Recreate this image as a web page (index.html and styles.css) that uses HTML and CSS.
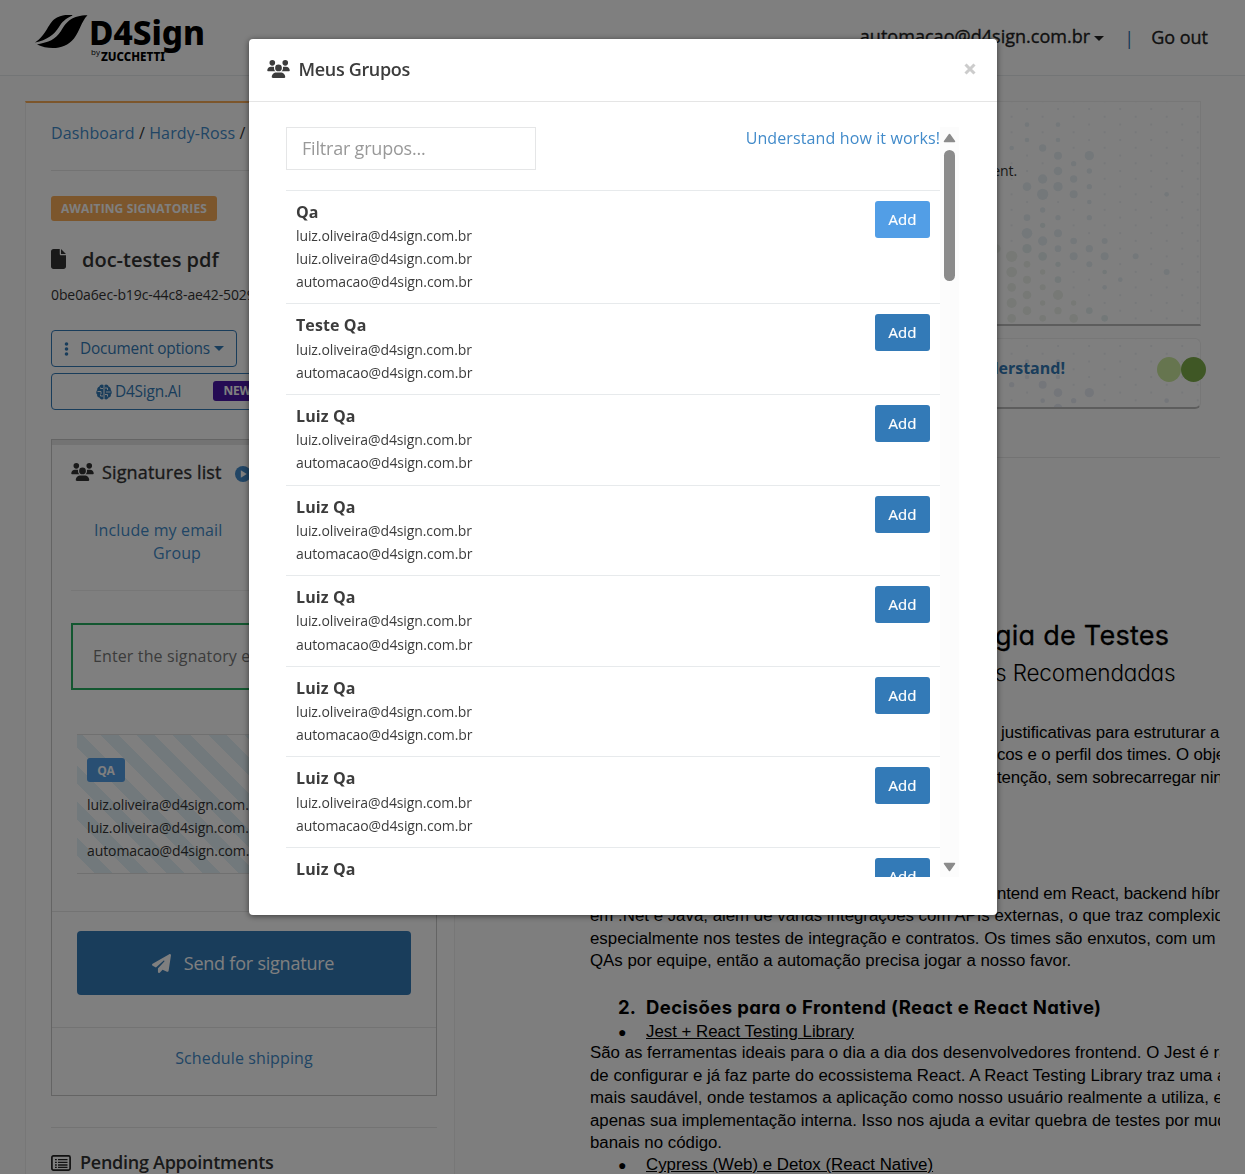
FILE: index.html
```html
<!DOCTYPE html>
<html lang="en">
<head>
<meta charset="utf-8">
<title>D4Sign</title>
<link rel="stylesheet" href="styles.css">
</head>
<body>
<svg class="defs" width="0" height="0" aria-hidden="true">
  <defs>
    <symbol id="users" viewBox="0 0 640 512"><path d="M144 0a80 80 0 1 1 0 160A80 80 0 1 1 144 0zM512 0a80 80 0 1 1 0 160A80 80 0 1 1 512 0zM0 298.7C0 239.8 47.8 192 106.7 192l42.7 0c15.9 0 31 3.5 44.6 9.7c-1.3 7.2-1.9 14.7-1.9 22.3c0 38.2 16.8 72.5 43.3 96c-.2 0-.4 0-.7 0L21.3 320C9.6 320 0 310.4 0 298.7zM405.3 320c-.2 0-.4 0-.7 0c26.6-23.5 43.3-57.8 43.3-96c0-7.6-.7-15-1.9-22.3c13.6-6.3 28.7-9.7 44.6-9.7l42.7 0C592.2 192 640 239.8 640 298.7c0 11.8-9.6 21.3-21.3 21.3l-213.3 0zM224 224a96 96 0 1 1 192 0 96 96 0 1 1 -192 0zM128 485.3C128 411.7 187.7 352 261.3 352l117.3 0C452.3 352 512 411.7 512 485.3c0 14.7-11.9 26.7-26.7 26.7l-330.7 0c-14.7 0-26.7-11.9-26.7-26.7z"/></symbol>
    <pattern id="grid" width="93.1" height="46.55" patternUnits="userSpaceOnUse" x="88" y="9.7">
      <circle cx="23.300" cy="23.300" r="3.500" fill="#eef1f4"/><circle cx="69.800" cy="0" r="3.500" fill="#eef1f4"/><circle cx="69.800" cy="46.550" r="3.500" fill="#eef1f4"/>
    </pattern>
  </defs>
</svg>

<div class="page">
  <header class="topbar">
    <svg class="logo" width="172" height="50" viewBox="0 0 172 50">
      <path d="M0 28.500 C12 21 13 8 22 3.500 C28 .5 31 1 37 1 L37.500 1.500 C30 5 27 8 24 13 C19 21 12 26 0 28.500Z"/>
      <path d="M2 30.500 C14 28 20 26 26 17 C32 7 37 1.500 52.500 1.300 C46 8 45 17 39 24.500 C30 36 14 36 2 30.500Z"/>
      <text class="logo-name" x="54" y="31" textLength="116" lengthAdjust="spacingAndGlyphs">D4Sign</text>
      <text class="logo-by" x="56" y="41">by</text>
      <text class="logo-sub" x="66" y="46.500" textLength="64" lengthAdjust="spacingAndGlyphs">ZUCCHETTI</text>
    </svg>
    <nav class="account">
      <span class="mail">automacao@d4sign.com.br</span><i class="caret"></i>
      <span class="bar">|</span>
      <span class="out">Go out</span>
    </nav>
  </header>

  <div class="columns">
    <section class="doc-card">
      <div class="crumbs"><a>Dashboard</a> / <a>Hardy-Ross</a> /</div>
      <div class="status">AWAITING SIGNATORIES</div>
      <h2 class="doc-title"><svg width="15" height="20" viewBox="0 0 384 512"><path d="M0 64C0 28.7 28.7 0 64 0L224 0l0 128c0 17.7 14.3 32 32 32l128 0 0 288c0 35.3-28.7 64-64 64L64 512c-35.3 0-64-28.7-64-64L0 64zm384 64l-128 0L256 0 384 128z"/></svg><span>doc-testes pdf</span></h2>
      <div class="uuid">0be0a6ec-b19c-44c8-ae42-5029</div>
      <button class="outline options"><svg width="5" height="14" viewBox="0 0 5 14"><circle cx="2.5" cy="2" r="1.8"/><circle cx="2.5" cy="7" r="1.8"/><circle cx="2.5" cy="12" r="1.8"/></svg><span>Document options</span><i class="caret"></i></button>
      <button class="outline ai"><svg width="16" height="16" viewBox="0 0 16 16"><path d="M7.5 1v14C5.5 16 4 15 3.4 13.6 1.6 13.6.8 12 1.2 10.6-.2 9.4.1 7 1.2 6 .9 4.300 2 3 3.200 2.700 4 .5 6 0 7.500 1zM8.500 1v14c2 1 3.500 0 4.100-1.400 1.800 0 2.600-1.600 2.200-3 1.400-1.200 1.100-3.600 0-4.600.3-1.700-.8-3-2-3.300C12 .5 10 0 8.500 1z"/><path class="folds" d="M7 4.500H4.500v-1M1.500 7.500H5v2.500M7 12H4.500v-1.500M9 4h2.500v2M14.500 8H10M9 10.500h2.500v2"/></svg><span>D4Sign.AI</span><b class="new">NEW</b></button>

      <div class="panel">
        <h3 class="panel-title"><svg width="23" height="18"><use href="#users"/></svg><span>Signatures list</span><svg class="play" width="16" height="16" viewBox="0 0 16 16"><circle cx="8" cy="8" r="8"/><path d="M5.800 4.200v7.600l6-3.800z"/></svg></h3>
        <div class="actions"><a>Include my email</a><a>Group</a></div>
        <div class="email-input">Enter the signatory email</div>
        <div class="group">
          <b class="tag">QA</b>
          <div>luiz.oliveira@d4sign.com.br</div>
          <div>luiz.oliveira@d4sign.com.br</div>
          <div>automacao@d4sign.com.br</div>
        </div>
        <div class="send-wrap"><button class="send"><svg width="19" height="19" viewBox="0 0 512 512"><path d="M498.100 5.600c10.100 7 15.400 19.100 13.500 31.200l-64 416c-1.500 9.700-7.400 18.200-16 23s-18.900 5.400-28 1.600L284 427.700l-68.500 74.100c-8.900 9.700-22.900 12.900-35.200 8.100S160 493.200 160 480l0-83.600c0-4 1.500-7.800 4.200-10.800L331.800 202.800c5.800-6.300 5.600-16-.4-22s-15.700-6.400-22-.7L106 360.800 17.700 316.600C7.100 311.300 .3 300.700 0 288.900s5.900-22.800 16.100-28.700l448-256c10.700-6.100 23.900-5.500 34 1.400z"/></svg><span>Send for signature</span></button></div>
        <div class="schedule"><a>Schedule shipping</a></div>
      </div>
      <h3 class="pending"><svg width="20" height="16" viewBox="0 0 20 16"><rect x=".9" y=".9" width="18.200" height="14.200" rx="1.500"/><path d="M4 4.600h1.800M4 7.300h1.800M4 10h1.800M4 12.400h1.800M7 4.600h9.500M7 7.300h9.500M7 10h9.500M7 12.400h9.500"/></svg><span>Pending Appointments</span></h3>
    </section>

    <section class="right">
      <div class="info-card">
        <svg class="dots" width="261" height="222" viewBox="0 0 261 222">
          <g transform="translate(51 -4) scale(.3333)">
            <rect x="-10" width="640" height="680" fill="url(#grid)"/>
            <g fill="#e9f0f5">
              <circle cx="158" cy="150" r="11"/><circle cx="204" cy="173" r="12"/><circle cx="298" cy="173" r="14"/><circle cx="204" cy="219" r="13"/><circle cx="298" cy="219" r="8"/><circle cx="158" cy="243" r="14"/><circle cx="251" cy="243" r="11"/><circle cx="111" cy="266" r="13"/><circle cx="204" cy="266" r="14"/><circle cx="298" cy="266" r="8"/><circle cx="158" cy="289" r="17"/><circle cx="251" cy="289" r="12"/><circle cx="111" cy="359" r="10"/><circle cx="158" cy="336" r="8"/><circle cx="204" cy="359" r="8"/><circle cx="298" cy="359" r="8"/><circle cx="111" cy="406" r="16"/><circle cx="204" cy="406" r="12"/><circle cx="158" cy="429" r="14"/><circle cx="251" cy="429" r="10"/><circle cx="344" cy="429" r="9"/><circle cx="204" cy="452" r="10"/><circle cx="298" cy="452" r="11"/><circle cx="251" cy="475" r="12"/><circle cx="344" cy="475" r="12"/><circle cx="437" cy="475" r="9"/><circle cx="298" cy="499" r="9"/><circle cx="530" cy="522" r="9"/><circle cx="111" cy="80" r="7"/><circle cx="204" cy="80" r="7"/><circle cx="111" cy="126" r="7"/><circle cx="204" cy="126" r="7"/><circle cx="65" cy="150" r="7"/><circle cx="251" cy="197" r="8"/><circle cx="530" cy="289" r="7"/><circle cx="298" cy="312" r="7"/><circle cx="391" cy="545" r="7"/><circle cx="344" cy="568" r="7"/>
            </g>
            <g fill="#e7f0f1"><circle cx="111" cy="452" r="14"/><circle cx="158" cy="475" r="13"/><circle cx="204" cy="499" r="8"/><circle cx="204" cy="545" r="10"/><circle cx="298" cy="638" r="10"/><circle cx="344" cy="661" r="10"/><circle cx="158" cy="382" r="8"/><circle cx="344" cy="522" r="7"/></g>
            <g fill="#eef2ec">
              <circle cx="65" cy="475" r="17"/><circle cx="65" cy="522" r="16"/><circle cx="65" cy="568" r="13"/><circle cx="65" cy="615" r="15"/><circle cx="65" cy="661" r="13"/><circle cx="19" cy="452" r="13"/><circle cx="111" cy="499" r="10"/><circle cx="111" cy="545" r="12"/><circle cx="111" cy="591" r="13"/><circle cx="111" cy="638" r="13"/><circle cx="158" cy="522" r="8"/><circle cx="158" cy="568" r="9"/><circle cx="158" cy="615" r="8"/><circle cx="158" cy="661" r="10"/><circle cx="204" cy="591" r="15"/><circle cx="204" cy="638" r="11"/><circle cx="251" cy="615" r="8"/><circle cx="251" cy="661" r="13"/>
            </g>
          </g>
        </svg>
        <span class="info-text">sign the document.</span>
      </div>
      <div class="help-card">
        <svg class="dots" width="261" height="68" viewBox="0 0 261 68">
          <g transform="translate(51 -4) scale(.3333)">
            <rect x="-10" width="640" height="230" fill="url(#grid)"/>
            <g fill="#e9edf4"><circle cx="158" cy="149" r="12"/><circle cx="204" cy="173" r="13"/><circle cx="298" cy="173" r="14"/><circle cx="251" cy="197" r="8"/><circle cx="204" cy="219" r="13"/><circle cx="65" cy="149" r="8"/><circle cx="111" cy="80" r="7"/><circle cx="204" cy="80" r="7"/><circle cx="111" cy="126" r="7"/><circle cx="204" cy="126" r="7"/><circle cx="530" cy="197" r="7"/><circle cx="158" cy="197" r="7"/></g>
          </g>
        </svg>
        <b class="help-text">Understand!</b>
        <span class="lights"><i></i><i></i></span>
      </div>
      <div class="viewer">
        <div class="pdf-h1">gia de Testes</div>
        <div class="pdf-h2">s Recomendadas</div>
        <div class="pdf-intro">
          <p class="inset">justificativas para estruturar a</p>
          <p class="frag">cos e o perfil dos times. O obje</p>
          <p class="frag">tenção, sem sobrecarregar nin</p>
        </div>
        <div class="pdf-body">
          <p class="frag">ntend em React, backend híbri</p>
          <p>em .Net e Java, além de várias integrações com APIs externas, o que traz complexid</p>
          <p>especialmente nos testes de integração e contratos. Os times são enxutos, com um</p>
          <p>QAs por equipe, então a automação precisa jogar a nosso favor.</p>
        </div>
        <div class="pdf-h3"><span>2.</span>Decisões para o Frontend (React e React Native)</div>
        <div class="bullet"><span>●</span><u>Jest + React Testing Library</u></div>
        <div class="pdf-body tight">
          <p>São as ferramentas ideais para o dia a dia dos desenvolvedores frontend. O Jest é rá</p>
          <p>de configurar e já faz parte do ecossistema React. A React Testing Library traz uma a</p>
          <p>mais saudável, onde testamos a aplicação como nosso usuário realmente a utiliza, e</p>
          <p>apenas sua implementação interna. Isso nos ajuda a evitar quebra de testes por mud</p>
          <p>banais no código.</p>
        </div>
        <div class="bullet"><span>●</span><u>Cypress (Web) e Detox (React Native)</u></div>
      </div>
    </section>
  </div>
</div>

<div class="backdrop"></div>
<div class="modal">
  <div class="modal-head"><svg width="23" height="18"><use href="#users"/></svg><span>Meus Grupos</span><svg class="close" width="12" height="12" viewBox="0 0 12 12"><path d="M1.500 1.500l9 9M10.500 1.500l-9 9"/></svg></div>
  <div class="modal-body">
    <div class="list">
      <div class="tools"><div class="filter">Filtrar grupos...</div><a>Understand how it works!</a></div>
      <div class="row first"><div><b>Qa</b><p>luiz.oliveira@d4sign.com.br</p><p>luiz.oliveira@d4sign.com.br</p><p>automacao@d4sign.com.br</p></div><button class="hover">Add</button></div>
      <div class="row"><div><b>Teste Qa</b><p>luiz.oliveira@d4sign.com.br</p><p>automacao@d4sign.com.br</p></div><button>Add</button></div>
      <div class="row"><div><b>Luiz Qa</b><p>luiz.oliveira@d4sign.com.br</p><p>automacao@d4sign.com.br</p></div><button>Add</button></div>
      <div class="row"><div><b>Luiz Qa</b><p>luiz.oliveira@d4sign.com.br</p><p>automacao@d4sign.com.br</p></div><button>Add</button></div>
      <div class="row"><div><b>Luiz Qa</b><p>luiz.oliveira@d4sign.com.br</p><p>automacao@d4sign.com.br</p></div><button>Add</button></div>
      <div class="row"><div><b>Luiz Qa</b><p>luiz.oliveira@d4sign.com.br</p><p>automacao@d4sign.com.br</p></div><button>Add</button></div>
      <div class="row"><div><b>Luiz Qa</b><p>luiz.oliveira@d4sign.com.br</p><p>automacao@d4sign.com.br</p></div><button>Add</button></div>
      <div class="row"><div><b>Luiz Qa</b></div><button>Add</button></div>
    </div>
    <div class="scrollbar">
      <svg width="13" height="10" viewBox="0 0 13 10"><path d="M6.500 1.500L11.500 8.500H1.500z"/></svg>
      <i></i>
      <svg class="down" width="13" height="10" viewBox="0 0 13 10"><path d="M6.500 8.500L11.500 1.500H1.500z"/></svg>
    </div>
  </div>
</div>
</body>
</html>
```
FILE: styles.css
```css
* { box-sizing: border-box; }
html, body { margin: 0; height: 1174px; overflow: hidden; }
body { background: #fdfdfd; color: #333; font-family: "Open Sans", "Noto Sans", sans-serif; font-size: 16px; line-height: 23px; }
a { color: #428bca; letter-spacing: .12px; }
h2, h3, p { margin: 0; }
button { font-family: inherit; }
svg { flex: none; }
.defs { position: absolute; }
.page { height: 1174px; overflow: hidden; }

.topbar { height: 76px; border-bottom: 1px solid #e7eaec; display: flex; justify-content: space-between; padding: 14px 37px 0 35px; background: #fff; }
.logo { overflow: visible; }
.logo-name { font: 800 34px "Noto Sans", sans-serif; }
.logo-by { font: 8px "Open Sans", sans-serif; }
.logo-sub { font: 800 12px "Noto Sans", sans-serif; }
.account { display: flex; height: 46px; align-items: center; font-size: 18px; color: #222; white-space: nowrap; -webkit-text-stroke: .35px #222; }
.caret { display: inline-block; border: 5px solid transparent; border-top-color: currentColor; border-bottom: 0; margin-left: 4px; }
.bar { color: #2a6fae; margin: 2px 17px 0 20px; -webkit-text-stroke: 0; }
.mail { margin-top: -2px; letter-spacing: .03px; }
.account .caret { margin-top: 2px; }

.columns { display: flex; padding: 25px 0 0 25px; }
.doc-card { width: 430px; height: 1100px; background: #fff; border: 1px solid #eee; border-top: 2px solid #f8ac59; padding: 19px 17px 0 25px; }
.crumbs { height: 49px; border-bottom: 1px solid #e7e7e7; letter-spacing: .12px; }
.status { width: 166px; height: 25px; margin-top: 25px; border-radius: 3px; background: #f8ac59; color: #fff; font-size: 12px; font-weight: 700; line-height: 25px; text-align: center; white-space: nowrap; letter-spacing: .12px; }
.doc-title { display: flex; align-items: center; height: 28px; margin-top: 24px; font-size: 20px; font-weight: 600; }
.doc-title span { margin-left: 16px; }
.doc-title svg, .panel-title svg { fill: #333; }
.uuid { height: 23px; margin-top: 10px; font-size: 14px; white-space: nowrap; letter-spacing: -.1px; }
.outline { display: flex; align-items: center; height: 37px; background: #fff; border: 1px solid #337ab7; border-radius: 4px; color: #337ab7; font-size: 15.4px; letter-spacing: -.2px; padding: 0 12px; }
.outline svg, .send svg { fill: currentColor; }
.options { width: 186px; margin-top: 24px; }
.options span { margin-left: 11px; white-space: nowrap; }
.ai { width: 250px; margin-top: 6px; padding-left: 44px; }
.ai span { margin-left: 3px; }
.ai .folds { fill: none; stroke: #fff; stroke-width: .9; }
.new { background: #4b17a8; color: #fff; font-size: 12px; height: 20px; line-height: 20px; padding: 0 10px; border-radius: 3px; margin-left: 32px; margin-top: -1px; }

.panel { height: 657px; margin-top: 29px; border: 1px solid #c8c8c8; box-shadow: inset 0 5px #e7e7e7; }
.panel-title { display: flex; align-items: center; height: 24px; margin: 20px 0 0 19px; font-size: 18px; font-weight: 400; -webkit-text-stroke: .35px #333; letter-spacing: .14px; }
.panel-title span { margin: 0 13px 0 8px; }
.panel-title .play { fill: #428bca; margin-top: 3px; -webkit-text-stroke: 0; }
.play path { fill: #fff; }
.actions { display: flex; flex-direction: column; margin-left: 19px; height: 107px; padding-top: 35px; border-bottom: 1px solid #eee; }
.actions a { margin-left: 23px; line-height: 23px; }
.actions a + a { margin-left: 82px; }
.email-input { margin: 32px 19px 0; height: 67px; line-height: 63px; padding-left: 20px; border: 2px solid #27ae60; color: #777; white-space: nowrap; letter-spacing: .12px; }
.group { margin: 44px 25px 0; height: 140px; padding: 23px 10px 0; border-top: 1px solid #e1e1e1; border-bottom: 1px solid #e1e1e1; font-size: 14px; letter-spacing: -.1px; background: repeating-linear-gradient(45deg, #fff 0 12.7px, #e5f3f8 12.7px 25.4px); }
.tag { display: block; width: 38px; height: 24px; margin-bottom: 11px; background: #529ee6; border-radius: 3px; color: #fff; font-size: 12px; line-height: 25px; text-align: center; }
.send-wrap { margin-top: 37px; padding: 19px 25px 0; height: 116px; border-top: 1px solid #e7e7e7; }
.send { width: 334px; height: 64px; border: 0; border-radius: 4px; background: #337ab7; color: #fff; font-size: 18px; letter-spacing: -.22px; display: flex; align-items: center; justify-content: center; gap: 13px; padding-right: 8px; }
.schedule { border-top: 1px solid #e7e7e7; text-align: center; padding-top: 19px; }
.pending { margin-top: 31px; border-top: 1px solid #e7e7e7; display: flex; align-items: center; gap: 9px; padding-top: 23px; font-size: 18px; font-weight: 600; letter-spacing: -.27px; }
.pending svg { fill: none; stroke: #222; stroke-width: 1.7; }
.pending path { stroke-width: 1.3; }

.right { width: 749px; margin-left: 16px; }
.info-card, .help-card { position: relative; width: 730px; background: #fff; border: 1px solid #eee; border-bottom: 2px solid #bbb; }
.info-card { height: 225px; }
.help-card { height: 71px; margin-top: 12px; border-radius: 6px; }
.dots { position: absolute; right: 0; top: 0; }
.info-text, .help-text { position: absolute; white-space: nowrap; }
.info-text { right: 183px; top: 57px; font-size: 14px; letter-spacing: -.1px; }
.help-text { right: 135px; top: 18px; color: #337ab7; }
.lights { position: absolute; right: -6px; top: 18px; display: flex; }
.lights i { width: 24px; height: 25px; border-radius: 50%; background: #cdea9f; }
.lights i + i { width: 25px; background: #7eae4b; }
.viewer { margin-top: 48px; height: 760px; border-top: 1px solid #e7e7e7; overflow: hidden; padding: 161px 0 0 119px; color: #000; font-family: "Liberation Sans", Arial, sans-serif; font-size: 16.85px; white-space: nowrap; }
.viewer p { line-height: 22.4px; }
.viewer .frag { padding-left: 407px; letter-spacing: -.1px; }
.viewer .inset { padding-left: 411px; letter-spacing: -.05px; }
.pdf-h1, .pdf-h2, .pdf-h3 { font-family: Inter, sans-serif; font-feature-settings: "cv11"; }
.pdf-h1 { padding-left: 405px; font-size: 27px; line-height: 34px; height: 36px; letter-spacing: .25px; -webkit-text-stroke: .3px #000; }
.pdf-h2 { padding-left: 405px; font-size: 22.5px; line-height: 36px; font-weight: 300; letter-spacing: -.15px; }
.pdf-intro { margin-top: 31px; }
.pdf-body { margin-top: 93.500px; }
.pdf-h3 { margin-top: 21.500px; padding-left: 28px; font-size: 18.5px; font-weight: 700; line-height: 26px; height: 26px; letter-spacing: .38px; }
.pdf-h3 span { display: inline-block; width: 28px; letter-spacing: 0; }
.bullet { padding-left: 28px; line-height: 23px; height: 22.5px; }
.bullet span { display: inline-block; width: 28px; font-size: 14px; }
.pdf-body.tight { margin-top: 0; }
.pdf-body.tight + .bullet { margin-top: -1px; }

.backdrop { position: fixed; inset: 0; background: rgba(0,0,0,.5); }
.modal { position: fixed; left: 249px; top: 39px; width: 748px; height: 876px; background: #fff; border-radius: 4px; box-shadow: 0 1px 6px rgba(0,0,0,.55); color: #3c3c3c; }
.modal-head { height: 63px; border-bottom: 1px solid #e5e5e5; display: flex; align-items: center; padding: 0 21px 2px 18px; font-size: 18px; font-weight: 600; letter-spacing: -.33px; }
.modal-head span { margin-left: 8.5px; }
.modal-head svg { fill: #3c3c3c; margin-top: -1px; }
.modal-head .close { margin-left: auto; fill: none; stroke: #ccc; stroke-width: 3; }
.modal-body { display: flex; margin: 25px 0 0 37px; height: 750px; width: 673px; overflow: hidden; }
.list { width: 654px; }
.tools { display: flex; justify-content: space-between; height: 63px; }
.filter { width: 250px; height: 43px; border: 1px solid #e5e6e7; padding-left: 15px; font-size: 18px; line-height: 41px; color: #999; letter-spacing: -.2px; }
.row { height: 90.6px; border-top: 1px solid #e7eaec; padding: 10px 10px 0; display: flex; justify-content: space-between; align-items: flex-start; }
.row.first { height: 113.4px; }
.row b { display: block; line-height: 23.3px; letter-spacing: .1px; }
.row p { font-size: 14px; line-height: 23.1px; letter-spacing: -.1px; }
.row button { flex: none; width: 55px; height: 37px; border: 0; border-radius: 3px; padding: 0 0 1px; background: #337ab7; color: #fff; font-size: 15px; -webkit-text-stroke: .2px #fff; }
.row button.hover { background: #529ee6; }
.scrollbar { width: 19px; background: #fcfcfc; display: flex; flex-direction: column; align-items: center; padding: 6px 0 5px; fill: #8b8b8b; stroke: #8b8b8b; stroke-width: 1.5; stroke-linejoin: round; }
.scrollbar i { width: 11px; height: 131px; margin-top: 7px; border-radius: 6px; background: #8b8b8b; }
.scrollbar .down { margin-top: auto; }
```
